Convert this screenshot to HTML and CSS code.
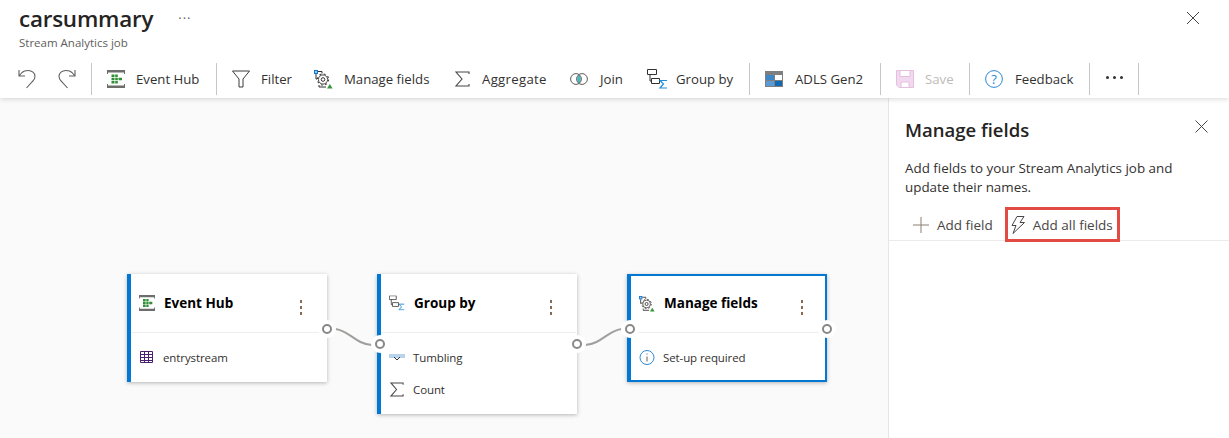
FILE: index.html
```html
<!DOCTYPE html>
<html>
<head>
<meta charset="utf-8">
<link rel="stylesheet" href="styles.css">
<title>carsummary</title>
</head>
<body>
<header class="top">
  <div class="title-row">
    <h1>carsummary</h1>
    <span class="title-more">···</span>
    <svg class="top-close" width="14" height="14" viewBox="0 0 14 14"><path d="M1 1l12 12M13 1L1 13" stroke="#484644" fill="none"/></svg>
  </div>
  <div class="subtitle">Stream Analytics job</div>
  <div class="toolbar">
    <button class="tool icon-only undo">
      <svg width="18" height="20" viewBox="0 0 18 20"><path d="M1 1v6h6M1 7l3-3.500C5.500 2 7.500 1.500 10 1.500c4 0 7 2.500 7 6 0 2-1 3.500-2.500 5L8.500 19" stroke="#605e5c" fill="none" stroke-width="1.100"/></svg>
    </button>
    <button class="tool icon-only redo">
      <svg width="18" height="20" viewBox="0 0 18 20"><path d="M17 1v6h-6M17 7l-3-3.500C12.500 2 10.500 1.500 8 1.500c-4 0-7 2.500-7 6 0 2 1 3.500 2.500 5L9.500 19" stroke="#605e5c" fill="none" stroke-width="1.100"/></svg>
    </button>
    <span class="sep"></span>
    <button class="tool t-hub">
      <svg width="18" height="18" viewBox="0 0 18 18"><use href="#hub-icon"/></svg>
      Event Hub
    </button>
    <span class="sep"></span>
    <button class="tool t-filter">
      <svg width="18" height="18" viewBox="0 0 18 18"><path d="M.5 1h17L11 9v8H7V9z" stroke="#3b3a39" fill="none"/></svg>
      Filter
    </button>
    <button class="tool t-manage">
      <svg width="19" height="19" viewBox="0 0 19 19"><use href="#manage-icon"/></svg>
      Manage fields
    </button>
    <button class="tool t-agg">
      <svg width="15" height="16" viewBox="0 0 15 16"><path d="M14 3V1H1l6 7-6 7h13v-2" stroke="#484644" fill="none" stroke-width="1.100"/></svg>
      Aggregate
    </button>
    <button class="tool t-join">
      <svg width="18" height="12" viewBox="0 0 18 12"><path d="M9 1.500c2.400 2.600 2.400 6.400 0 9-2.400-2.600-2.400-6.400 0-9z" fill="#45b8c4"/><circle cx="6" cy="6" r="5.400" stroke="#605e5c" fill="none"/><circle cx="12" cy="6" r="5.400" stroke="#605e5c" fill="none"/></svg>
      Join
    </button>
    <button class="tool t-group">
      <svg width="21" height="20" viewBox="0 0 21 20"><use href="#group-icon"/></svg>
      Group by
    </button>
    <span class="sep"></span>
    <button class="tool t-adls">
      <svg width="18" height="16" viewBox="0 0 18 16"><path d="M0 0h18v16H0z" fill="#7f7f7f"/><path d="M1 4h8v5H1z" fill="#3f86c6"/><path d="M10 4h7v5h-7z" fill="#fff"/><path d="M1 10h8v5H1z" fill="#5b9bd5"/><path d="M10 10h7v5h-7z" fill="#0f69b4"/></svg>
      ADLS Gen2
    </button>
    <span class="sep"></span>
    <button class="tool t-save is-off">
      <svg width="18" height="18" viewBox="0 0 18 18"><path d="M.5.500h17v17H3L.5 15z" fill="#f3d9ef" stroke="#e4bfe0"/><path d="M4 .500h10v6H4zM5 12h8v5.500H5z" fill="#fff" stroke="#e4bfe0"/></svg>
      Save
    </button>
    <span class="sep"></span>
    <button class="tool t-feedback">
      <svg width="18" height="18" viewBox="0 0 18 18"><circle cx="9" cy="9" r="8.400" stroke="#2b88d8" fill="none"/><text x="9" y="13.500" class="help-mark">?</text></svg>
      Feedback
    </button>
    <span class="sep"></span>
    <button class="tool t-more"><i></i><i></i><i></i></button>
    <span class="sep"></span>
  </div>
</header>

<svg class="defs" width="0" height="0">
  <symbol id="hub-icon" viewBox="0 0 18 18">
    <path d="M0 0h18v2.500H0zM0 15.500h18V18H0z" fill="#6d6d6b"/>
    <path d="M.5 2v2M17.500 2v2M.5 14v2M17.500 14v2" stroke="#6d6d6b"/>
    <path d="M4.500 4.500h3v2.500h-3zM4.500 7.700h3v2.600h-3zM4.500 11h3v2.500h-3zM8.200 4.500h2.600V7H8.200zM8.200 7.700h2.600v2.600H8.200zM8.200 11h2.600v2.500H8.200zM11.500 7.700h3.500v2.600h-3.500z" fill="#2f8f35"/>
  </symbol>
  <symbol id="manage-icon" viewBox="0 0 19 19">
    <path d="M0 0h4v4H0z" fill="#0f78d4"/><path d="M1 1h2v2H1z" fill="#9cc8ee"/>
    <path d="M4 1.500h4v2M2 4v5h1M5 15v2h7" stroke="#323130" fill="none"/>
    <circle cx="9" cy="9.500" r="4.600" stroke="#484644" fill="#fff"/>
    <circle cx="9" cy="9.500" r="5.600" stroke="#484644" stroke-width="1.100" stroke-dasharray="2 2.400" fill="none"/>
    <circle cx="9" cy="9.500" r="1.800" stroke="#323130" fill="none"/>
    <path d="M13 18.500l2.800-4.500 2.800 4.500z" fill="#3a963c"/>
  </symbol>
  <symbol id="group-icon" viewBox="0 0 21 20">
    <path d="M.5.500h9v5h-9zM4.500 9.500h8v5h-8z" stroke="#323130" fill="#fff"/>
    <path d="M3 5.500v6.500h1.500" stroke="#323130" fill="none"/>
    <path d="M20 11.500h-7l3.500 3.500-3.500 4h7" stroke="#1f8fd8" fill="none" stroke-width="1.200"/>
  </symbol>
</svg>

<main class="work">
  <section class="canvas">
    <svg class="wires" width="888" height="340" viewBox="0 0 888 340">
      <path d="M335 231c14 1 20 15 37 16M585 247c17-1 23-15 37-16" stroke="#a19f9d" stroke-width="2" fill="none"/>
    </svg>

    <article class="node node-hub">
      <div class="node-head">
        <svg width="16" height="16" viewBox="0 0 18 18"><use href="#hub-icon"/></svg>
        <strong>Event Hub</strong>
        <span class="kebab"><i></i><i></i><i></i></span>
      </div>
      <div class="node-body">
        <div class="node-row">
          <svg width="16" height="13" viewBox="0 0 14 13"><path d="M.5.500h12v11H.5zM.5 3.500h12M.5 6.500h12M.5 9.500h12M4.500 .5v11M8.500 .5v11" stroke="#4b1f6f" fill="none"/></svg>
          entrystream
        </div>
      </div>
      <span class="port port-out"></span>
    </article>

    <article class="node node-group">
      <div class="node-head">
        <svg width="16" height="16" viewBox="0 0 21 20"><use href="#group-icon"/></svg>
        <strong>Group by</strong>
        <span class="kebab"><i></i><i></i><i></i></span>
      </div>
      <div class="node-body">
        <div class="node-row">
          <svg width="16" height="13" viewBox="0 0 16 13"><path d="M0 3h16v4H0z" fill="#b8d4ec"/><path d="M5 6l3 3 3-3" stroke="#323130" fill="none"/></svg>
          Tumbling
        </div>
        <div class="node-row">
          <svg width="16" height="15" viewBox="0 0 15 16"><path d="M14 3V1H1l6 7-6 7h13v-2" stroke="#484644" fill="none" stroke-width="1.100"/></svg>
          Count
        </div>
      </div>
      <span class="port port-in"></span>
      <span class="port port-out"></span>
    </article>

    <article class="node node-manage">
      <div class="node-head">
        <svg width="16" height="16" viewBox="0 0 19 19"><use href="#manage-icon"/></svg>
        <strong>Manage fields</strong>
        <span class="kebab"><i></i><i></i><i></i></span>
      </div>
      <div class="node-body">
        <div class="node-row">
          <svg width="16" height="15" viewBox="0 0 15 15"><circle cx="7.500" cy="7.500" r="7" stroke="#2b88d8" fill="none"/><path d="M7.500 6.500v5" stroke="#605e5c"/><path d="M7 3.500h1v1H7z" fill="#605e5c"/></svg>
          Set-up required
        </div>
      </div>
      <span class="port port-in"></span>
      <span class="port port-out"></span>
    </article>
  </section>

  <aside class="panel">
    <div class="panel-head">
      <h2>Manage fields</h2>
      <svg width="13" height="13" viewBox="0 0 13 13"><path d="M.5.500l12 12M12.500.500l-12 12" stroke="#484644" fill="none"/></svg>
    </div>
    <p class="panel-text">Add fields to your Stream Analytics job and update their names.</p>
    <div class="panel-actions">
      <button class="action action-plain">
        <svg width="16" height="16" viewBox="0 0 16 16"><path d="M8 0v16M0 8h16" stroke="#8a7f74" fill="none"/></svg>
        Add field
      </button>
      <button class="action action-marked">
        <svg width="14" height="18" viewBox="0 0 14 18"><path d="M6 .500h7L9 6.500h4.500L2 17.500l3-8H1z" stroke="#484644" fill="none"/></svg>
        Add all fields
      </button>
    </div>
  </aside>
</main>
</body>
</html>
```

FILE: styles.css
```css
html, body { margin: 0; height: 100%; overflow: hidden; }

body {
  color: #323130;
  font-family: "Open Sans", "Noto Sans", "Liberation Sans", sans-serif;
  font-size: 13px;
  background: #fafafa;
}

button {
  font: inherit;
  color: inherit;
  background: none;
  border: 0;
  padding: 0;
}

.defs { position: absolute; }

/* header */
.top {
  position: relative;
  z-index: 2;
  box-sizing: border-box;
  height: 98px;
  padding: 0 0 0 19px;
  background: #fff;
  box-shadow: 0 1px 5px rgba(0,0,0,0.16);
}

.title-row {
  display: flex;
  align-items: center;
  height: 37px;
  padding-top: 1px;
  box-sizing: border-box;
}

h1 {
  margin: 0;
  font-size: 22.400px;
  font-weight: 600;
  line-height: 32px;
  letter-spacing: -0.2px;
  color: #252423;
}

.title-more { margin-left: 25px; margin-top: -2px; color: #605e5c; font-size: 13px; letter-spacing: 1px; }
.top-close { margin-left: auto; margin-right: 29px; margin-top: -2px; }

.subtitle { margin-top: -2px; font-size: 11.500px; line-height: 16px; color: #605e5c; }

/* toolbar */
.toolbar {
  display: flex;
  align-items: center;
  height: 32px;
  margin-top: 12px;
  margin-left: -1px;
}

.tool {
  display: flex;
  align-items: center;
  flex: none;
  box-sizing: border-box;
  height: 32px;
  white-space: nowrap;
  font-size: 13.200px;
}

.tool svg { flex: none; }

.sep { flex: none; width: 1px; height: 32px; background: #c8c6c4; }

.icon-only { width: 40px; }
.redo { width: 33px; }
.t-hub { width: 124px; padding-left: 15px; gap: 11px; }
.t-filter { width: 97px; padding-left: 15px; gap: 11px; }
.t-manage { width: 141px; gap: 11px; }
.t-agg { width: 115px; gap: 12px; letter-spacing: 0.3px; }
.t-join { width: 77px; gap: 12px; }
.t-group { width: 102px; gap: 8px; }
.t-adls { width: 130px; padding-left: 15px; gap: 12px; }
.t-save { width: 88px; padding-left: 15px; gap: 11px; }
.t-feedback { width: 119px; padding-left: 15px; gap: 12px; }
.t-more { width: 48px; justify-content: center; gap: 4px; padding-bottom: 3px; }
.t-more i { width: 3px; height: 3px; border-radius: 50%; background: #323130; }

.is-off { color: #bdbbb9; }

.help-mark { font-size: 13px; fill: #2b88d8; text-anchor: middle; }

/* main area */
.work { display: flex; height: 340px; }

.canvas {
  position: relative;
  flex: none;
  width: 888px;
  height: 340px;
  overflow: hidden;
}

.wires { position: absolute; left: 0; top: 0; }

.node {
  position: absolute;
  top: 176px;
  box-sizing: border-box;
  width: 200px;
  background: #fff;
  border-left: 4px solid #0078d4;
  box-shadow: 0 1px 4px rgba(0,0,0,0.28);
}

.node-hub { left: 127px; height: 108px; }
.node-group { left: 377px; height: 140px; }
.node-manage { left: 627px; height: 108px; border: 2px solid #0078d4; border-left-width: 4px; }

.node-head {
  display: flex;
  align-items: center;
  gap: 9px;
  box-sizing: border-box;
  height: 59px;
  padding: 0 24px 0 8px;
  margin-right: 1px;
  border-bottom: 1px solid #f0eeec;
}

.node-head svg { margin-top: -1px; }

.node-head strong {
  flex: 1;
  margin-top: -1px;
  font-size: 13.500px;
  font-weight: 700;
  color: #000;
}

.node-manage .node-head { height: 57px; padding-right: 21px; }
.node-manage .node-head strong { margin-top: -3px; }
.node-manage .kebab { margin-top: 7px; }

.kebab {
  display: flex;
  flex-direction: column;
  gap: 3px;
  margin-top: 9px;
}

.kebab i { width: 2px; height: 3px; background: #8a6a50; }

.node-body { padding-top: 8px; }

.node-row {
  display: flex;
  align-items: center;
  gap: 8px;
  height: 32px;
  padding-left: 8px;
  font-size: 11.500px;
  letter-spacing: -0.1px;
}

.port {
  position: absolute;
  box-sizing: border-box;
  width: 10px;
  height: 10px;
  background: #fff;
  border: 2px solid #8a8886;
  border-radius: 50%;
  box-shadow: 0 0 0 4px #fff;
}

.node-hub .port-out { right: -5px; top: 50px; }
.node-group .port-in { left: -6px; top: 65px; }
.node-group .port-out { right: -5px; top: 65px; }
.node-manage .port-in { left: -6px; top: 48px; }
.node-manage .port-out { right: -7px; top: 48px; }

/* side panel */
.panel {
  flex: 1;
  box-sizing: border-box;
  background: #fff;
  border-left: 1px solid #e8e6e4;
}

.panel-head {
  display: flex;
  justify-content: space-between;
  align-items: center;
  padding: 18px 21px 0 16px;
}

.panel-head svg { margin-top: -7px; }

h2 {
  margin: 0;
  font-size: 18.500px;
  font-weight: 600;
  line-height: 28px;
  color: #252423;
}

.panel-text {
  margin: 15px 40px 0 16px;
  font-size: 13.400px;
  line-height: 19px;
}

.panel-actions {
  display: flex;
  align-items: center;
  box-sizing: border-box;
  height: 34px;
  margin-top: 10px;
  padding-left: 24px;
  border-bottom: 1px solid #edebe9;
}

.action {
  display: flex;
  align-items: center;
  gap: 8px;
  height: 34px;
  white-space: nowrap;
  font-size: 13.500px;
  color: #484644;
}

.action-plain { padding-top: 2px; }

.action-marked {
  box-sizing: border-box;
  width: 115px;
  height: 35px;
  margin-top: 2px;
  margin-left: 12px;
  padding-left: 3px;
  border: 3px solid #e24a44;
}
```
